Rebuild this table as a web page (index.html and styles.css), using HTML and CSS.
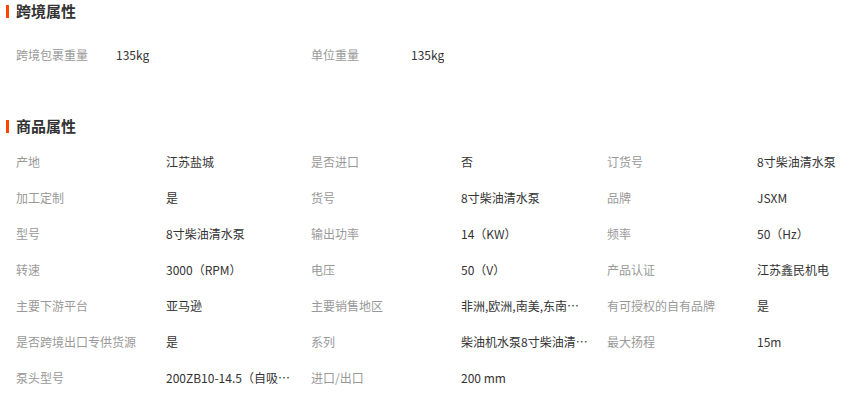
FILE: index.html
```html
<!DOCTYPE html>
<html lang="zh">
<head>
<meta charset="utf-8">
<link rel="stylesheet" href="styles.css">
</head>
<body>
<div class="page">
  <section class="sec sec-cross">
    <h3 class="sec-title">跨境属性</h3>
    <div class="grid grid-cross">
      <div class="cell"><span class="lbl">跨境包裹重量</span><span class="val">135kg</span></div>
      <div class="cell"><span class="lbl">单位重量</span><span class="val">135kg</span></div>
    </div>
  </section>
  <section class="sec sec-prod">
    <h3 class="sec-title">商品属性</h3>
    <div class="grid grid-prod">
      <div class="cell"><span class="lbl">产地</span><span class="val">江苏盐城</span></div>
      <div class="cell"><span class="lbl">是否进口</span><span class="val">否</span></div>
      <div class="cell"><span class="lbl">订货号</span><span class="val">8寸柴油清水泵</span></div>
      <div class="cell"><span class="lbl">加工定制</span><span class="val">是</span></div>
      <div class="cell"><span class="lbl">货号</span><span class="val">8寸柴油清水泵</span></div>
      <div class="cell"><span class="lbl">品牌</span><span class="val">JSXM</span></div>
      <div class="cell"><span class="lbl">型号</span><span class="val">8寸柴油清水泵</span></div>
      <div class="cell"><span class="lbl">输出功率</span><span class="val">14（KW）</span></div>
      <div class="cell"><span class="lbl">频率</span><span class="val">50（Hz）</span></div>
      <div class="cell"><span class="lbl">转速</span><span class="val">3000（RPM）</span></div>
      <div class="cell"><span class="lbl">电压</span><span class="val">50（V）</span></div>
      <div class="cell"><span class="lbl">产品认证</span><span class="val">江苏鑫民机电</span></div>
      <div class="cell"><span class="lbl">主要下游平台</span><span class="val">亚马逊</span></div>
      <div class="cell"><span class="lbl">主要销售地区</span><span class="val">非洲,欧洲,南美,东南亚,北美</span></div>
      <div class="cell"><span class="lbl">有可授权的自有品牌</span><span class="val">是</span></div>
      <div class="cell"><span class="lbl">是否跨境出口专供货源</span><span class="val">是</span></div>
      <div class="cell"><span class="lbl">系列</span><span class="val">柴油机水泵8寸柴油清水泵</span></div>
      <div class="cell"><span class="lbl">最大扬程</span><span class="val">15m</span></div>
      <div class="cell"><span class="lbl">泵头型号</span><span class="val">200ZB10-14.5（自吸泵）</span></div>
      <div class="cell"><span class="lbl">进口/出口</span><span class="val">200 mm</span></div>
    </div>
  </section>
</div>
</body>
</html>
```
FILE: styles.css
```css
html, body {
  margin: 0;
  padding: 0;
  background: #fff;
  overflow: hidden;
}
.page {
  font-family: "Noto Sans CJK SC", "Noto Sans", sans-serif;
  font-size: 12px;
  color: #333;
  width: 849px;
}
.sec-title {
  margin: 0;
  position: relative;
  padding-left: 16px;
  height: 25px;
  line-height: 22px;
  font-size: 15px;
  font-weight: bold;
  color: #333;
}
.sec-title::before {
  content: "";
  position: absolute;
  left: 6px;
  top: 5px;
  width: 3px;
  height: 13px;
  background: #ff4400;
}
.sec-cross .sec-title { margin-bottom: 12px; }
.sec-prod { margin-top: 42px; }
.sec-prod .sec-title { margin-bottom: 4px; }
.grid {
  display: grid;
  padding-left: 16px;
}
.grid-cross { grid-template-columns: 295px 1fr; }
.grid-prod { grid-template-columns: 295px 296px 1fr; }
.cell {
  display: flex;
  height: 36px;
  line-height: 36px;
  white-space: nowrap;
}
.lbl {
  flex: none;
  width: 150px;
  color: #999;
}
.grid-cross .lbl { width: 100px; }
.val {
  color: #333;
  max-width: 130px;
  overflow: hidden;
  text-overflow: ellipsis;
}
.grid-cross .val { max-width: 180px; }
```
